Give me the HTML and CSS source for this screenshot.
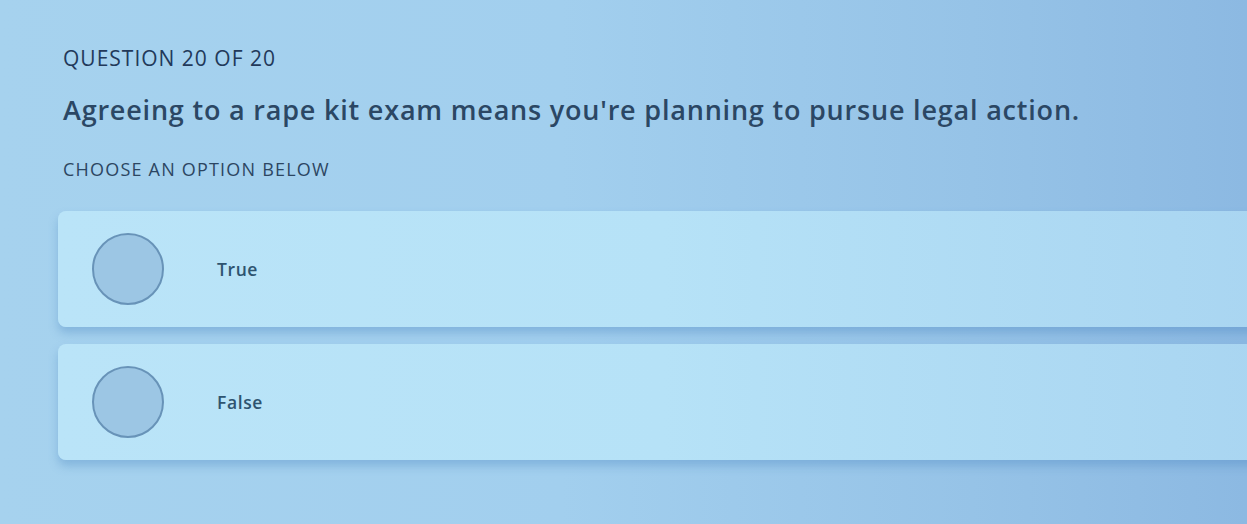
FILE: index.html
```html
<!DOCTYPE html>
<html lang="en">
<head>
  <meta charset="UTF-8">
  <meta name="viewport" content="width=device-width, initial-scale=1.0">
  <title>Question 20 of 20</title>
  <link rel="stylesheet" href="styles.css">
</head>
<body>
  <div class="quiz">
    <div class="counter">QUESTION 20 OF 20</div>
    <h1 class="question">Agreeing to a rape kit exam means you're planning to pursue legal action.</h1>
    <div class="hint">CHOOSE AN OPTION BELOW</div>
    <div class="options">
      <label class="option">
        <span class="radio"></span>
        <span class="label">True</span>
      </label>
      <label class="option">
        <span class="radio"></span>
        <span class="label">False</span>
      </label>
    </div>
  </div>
</body>
</html>
```

FILE: styles.css
```css
html, body { height: 100%; }
body {
  margin: 0;
  font-family: "Open Sans", Lato, sans-serif;
  color: #2a4560;
  background: linear-gradient(90deg, #a6d2ee 0%, #a2cfee 45%, #96c3e7 78%, #8cb9e2 100%);
  overflow: hidden;
}
.quiz { padding: 44px 0 0 58px; }
.counter { font-size: 21px; letter-spacing: 1px; margin-left: 5px; color: #22395a; line-height: 28px; }
.question { font-size: 27px; font-weight: 600; letter-spacing: 0.8px; margin: 20px 0 0 5px; line-height: 36px; color: #2b4764; }
.hint { font-size: 18px; letter-spacing: 1.2px; margin: 29px 0 0 5px; line-height: 24px; color: #2c4662; }
.options { margin-top: 30px; display: flex; flex-direction: column; gap: 17px; margin-right: -20px; }
.option {
  display: flex;
  align-items: center;
  height: 116px;
  padding-left: 34px;
  background: linear-gradient(90deg, #bae4f8 0%, #b6e2f7 50%, #a9d5f1 100%);
  border-radius: 8px;
  box-shadow: 0 6px 10px rgba(70, 130, 190, 0.35);
}
.radio {
  width: 72px;
  height: 72px;
  border-radius: 50%;
  background: #9cc6e4;
  border: 2px solid #6893b8;
  box-sizing: border-box;
}
.label { margin-left: 53px; font-size: 17.5px; font-weight: 600; letter-spacing: 0.6px; color: #2e5470; }
```
